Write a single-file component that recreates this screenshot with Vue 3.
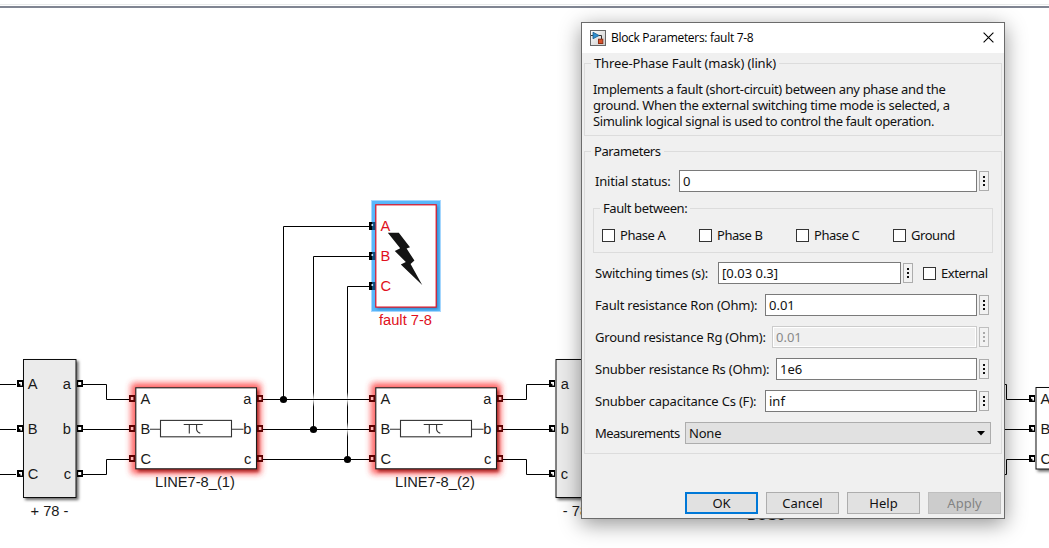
<script setup>
import { ref } from 'vue'

const portRows = [384, 429, 474]
const lineRows = [399, 429, 459]
const upper = ['A', 'B', 'C']
const lower = ['a', 'b', 'c']

const lines = [
  { x: 135, name: 'LINE7-8_(1)' },
  { x: 375, name: 'LINE7-8_(2)' },
]

const phases = ref([
  { name: 'Phase A', on: false },
  { name: 'Phase B', on: false },
  { name: 'Phase C', on: false },
  { name: 'Ground', on: false },
])

const fields = ref([
  { key: 'ron', label: 'Fault resistance Ron (Ohm):', value: '0.01', disabled: false },
  { key: 'rg', label: 'Ground resistance Rg (Ohm):', value: '0.01', disabled: true },
  { key: 'rs', label: 'Snubber resistance Rs (Ohm):', value: '1e6', disabled: false },
  { key: 'cs', label: 'Snubber capacitance Cs (F):', value: 'inf', disabled: false },
])

const initial = ref('0')
const times = ref('[0.03 0.3]')
const external = ref(false)
</script>

<template>
  <main class="canvas">
    <svg class="diagram" width="1049" height="548" viewBox="0 0 1049 548">
      <defs>
        <filter id="shadow" x="-20%" y="-20%" width="140%" height="140%">
          <feDropShadow dx="2" dy="2" stdDeviation="1.6" flood-color="#000" flood-opacity=".6" />
        </filter>
        <filter id="glow" x="-20%" y="-25%" width="140%" height="150%">
          <feGaussianBlur stdDeviation="3.2" />
        </filter>
        <filter id="soft" x="-10%" y="-10%" width="120%" height="120%">
          <feGaussianBlur stdDeviation="1.4" />
        </filter>
        <linearGradient id="hop" x1="0" y1="0" x2="0" y2="1">
          <stop offset="0" stop-color="#fff" stop-opacity="0" />
          <stop offset=".5" stop-color="#fff" stop-opacity=".95" />
          <stop offset="1" stop-color="#fff" stop-opacity="0" />
        </linearGradient>
        <g id="port">
          <rect width="6" height="7" fill="#000" />
          <path d="M2 2h3v3.4h-1.6v-1.6h-1.4z" fill="#fff" />
        </g>
        <g id="outport">
          <rect width="6" height="7" fill="#000" />
          <rect x="1.2" y="2" width="3" height="3" fill="#fff" />
        </g>
        <g id="redport">
          <rect width="6" height="7" fill="#5c0000" />
          <rect x="1.8" y="2" width="2.6" height="3" fill="#ffb4b4" />
        </g>
      </defs>

      <rect y="4" width="1049" height="1" fill="#e9ebeb" />
      <rect y="6" width="1049" height="2" fill="#808592" />

      <!-- bus blocks -->
      <g class="bus">
        <rect x="23.5" y="359.5" width="52.5" height="138" filter="url(#shadow)" />
        <rect x="556" y="359.5" width="52.5" height="138" filter="url(#shadow)" />
      </g>
      <rect x="1036" y="387.5" width="120" height="81.5" fill="#fff" stroke="#111" filter="url(#shadow)" />

      <!-- glow behind the highlighted line blocks -->
      <g v-for="l in lines" :key="l.name">
        <rect :x="l.x - 4" y="383" width="130" height="91" rx="3" fill="#ff3b3b" opacity=".8" filter="url(#glow)" />
        <rect :x="l.x + 3" y="390" width="121" height="82" fill="#7d0000" opacity=".6" filter="url(#soft)" />
      </g>

      <!-- wires -->
      <g class="wires">
        <path d="M283.5 399.5V226.5H369M313.5 429.5V256.5H369M347.5 459.5V286.5H369" />
      </g>
      <rect x="312" y="392" width="3" height="15" fill="url(#hop)" />
      <rect x="346" y="392" width="3" height="15" fill="url(#hop)" />
      <rect x="346" y="422" width="3" height="15" fill="url(#hop)" />
      <g class="wires">
        <path d="M0 384.5H16M0 429.5H16M0 474.5H16" />
        <path d="M83 384.5H106.5V399.5H129M83 429.5H129M83 474.5H106.5V459.5H129" />
        <path d="M263 399.5H369M263 429.5H369M263 459.5H369" />
        <path d="M503 399.5H526.5V384.5H549M503 429.5H549M503 459.5H526.5V474.5H549" />
        <path d="M1000 384.5H1006.5V399.5H1029M1000 429.5H1029M1000 474.5H1006.5V459.5H1029" />
      </g>
      <circle cx="283.5" cy="399.5" r="3.6" />
      <circle cx="313.5" cy="429.5" r="3.6" />
      <circle cx="347.5" cy="459.5" r="3.6" />

      <!-- bus ports and labels -->
      <g v-for="(y, i) in portRows" :key="'p' + y">
        <use href="#port" x="17" :y="y - 4" />
        <use href="#outport" x="77" :y="y - 4" />
        <use href="#port" x="549" :y="y - 4" />
        <text x="27.7" :y="y + 4.7">{{ upper[i] }}</text>
        <text x="71" :y="y + 4.7" text-anchor="end">{{ lower[i] }}</text>
        <text x="560.7" :y="y + 4.7">{{ lower[i] }}</text>
      </g>
      <text x="30.5" y="516">+ 78 -</text>
      <text x="562.8" y="516">- 78 +</text>
      <text x="747" y="519.8">BUS8</text>

      <!-- line blocks -->
      <g v-for="l in lines" :key="'b' + l.name" :transform="`translate(${l.x} 0)`">
        <rect x=".8" y="387.8" width="120.7" height="81" fill="#fff" stroke="#1c1c1c" stroke-width="1.1" />
        <path d="M15 429.2H25.5M96.5 429.2H108.5" class="thin" />
        <rect x="25.5" y="420.4" width="71" height="16.4" class="thin" />
        <path d="M48.7 424.5H67.7M54.3 424.5V433.5M61.6 424.5V429.5Q61.8 432 65.3 433.3" class="thin" />
        <g v-for="(y, i) in lineRows" :key="y">
          <use href="#redport" x="-6" :y="y - 4" />
          <use href="#redport" x="122" :y="y - 4" />
          <text x="5.6" :y="y + 4.7">{{ upper[i] }}</text>
          <text x="116.3" :y="y + 4.7" text-anchor="end">{{ lower[i] }}</text>
        </g>
        <text x="20" y="487.2">{{ l.name }}</text>
      </g>
      <g v-for="(y, i) in lineRows" :key="'r' + y">
        <use href="#port" x="1029" :y="y - 4" />
        <text x="1040.6" :y="y + 4.7">{{ upper[i] }}</text>
      </g>

      <!-- fault block -->
      <rect x="371" y="200" width="70" height="112" fill="#a8d8ff" />
      <rect x="372" y="201" width="68" height="110" fill="#5ab7fb" />
      <rect x="377" y="206" width="61" height="103" fill="#1f6fae" opacity=".75" filter="url(#soft)" />
      <rect x="375.8" y="204.8" width="60.4" height="102.3" fill="#fff" stroke="#e01020" stroke-width="1.2" />
      <g v-for="(y, i) in [226, 256, 286]" :key="'f' + y">
        <rect x="369" :y="y - 4" width="3" height="8" fill="#000" />
        <rect x="372" :y="y - 4" width="3.3" height="8" fill="#0c4a7a" />
        <rect x="371.5" :y="y - 2" width="1.6" height="2" fill="#b9e0ff" />
        <text class="red" x="380.5" :y="y + 4.8">{{ upper[i] }}</text>
      </g>
      <path d="M387.8 232.8H398.8L410 247.3L406.6 248.5L414.4 260.6L410.6 264L422.2 285L400.8 264.6L405.8 262L394.8 251L400.2 248.3Z" fill="#141414" />
      <text class="red" x="379" y="324.8">fault 7-8</text>
    </svg>

    <section class="dialog">
      <header class="titlebar">
        <svg class="appicon" width="16" height="16" viewBox="0 0 16 16">
          <defs>
            <linearGradient id="paper" x1="0" y1="0" x2="1" y2="1">
              <stop offset="0" stop-color="#fff" />
              <stop offset="1" stop-color="#c9c9c9" />
            </linearGradient>
          </defs>
          <rect x=".5" y=".5" width="15" height="15" fill="url(#paper)" stroke="#666" />
          <path d="M1 5.5H3M8.5 5.5H11.5V9" fill="none" stroke="#333" />
          <path d="M3 2.2L9 5.5L3 8.8Z" fill="#2f8fd0" stroke="#155b8c" stroke-width=".8" />
          <rect x="8.5" y="9.2" width="4.3" height="4.3" fill="#d9532c" stroke="#8e2f14" />
        </svg>
        <h1>Block Parameters: fault 7-8</h1>
        <svg class="close" width="11" height="11" viewBox="0 0 11 11">
          <path d="M.6 .6L10.4 10.4M10.4 .6L.6 10.4" stroke="#000" stroke-width="1.1" />
        </svg>
      </header>

      <div class="body">
        <div class="group about">
          <div class="legend wide">Three-Phase Fault (mask) (link)</div>
          <p>Implements a fault (short-circuit) between any phase and the<br />ground. When the external switching time mode is selected, a<br /><span class="tight">Simulink logical signal is used to control the fault operation.</span></p>
        </div>

        <div class="group params">
          <div class="legend">Parameters</div>
          <div class="row first">
            <label class="w-init">Initial status:</label>
            <input v-model="initial" />
            <button class="more"><i /><i /><i /></button>
          </div>

          <div class="group phases">
            <div class="legend">Fault between:</div>
            <div class="checks">
              <label v-for="p in phases" :key="p.name" class="check">
                <input v-model="p.on" type="checkbox" />{{ p.name }}
              </label>
            </div>
          </div>

          <div class="rows">
            <div class="row">
              <label class="w-times">Switching times (s):</label>
              <input v-model="times" />
              <button class="more"><i /><i /><i /></button>
              <label class="check ext"><input v-model="external" type="checkbox" />External</label>
            </div>
            <div v-for="f in fields" :key="f.key" class="row">
              <label :class="'w-' + f.key">{{ f.label }}</label>
              <input v-model="f.value" :disabled="f.disabled" />
              <button class="more" :disabled="f.disabled"><i /><i /><i /></button>
            </div>
            <div class="row">
              <label class="w-meas">Measurements</label>
              <div class="combo">
                <span>None</span>
                <svg width="8" height="5" viewBox="0 0 8 5"><path d="M0 0H8L4 4.4Z" /></svg>
              </div>
            </div>
          </div>
        </div>

        <footer>
          <button class="btn ok">OK</button>
          <button class="btn">Cancel</button>
          <button class="btn">Help</button>
          <button class="btn" disabled>Apply</button>
        </footer>
      </div>
    </section>
  </main>
</template>

<style>
body {
  margin: 0;
  overflow: hidden;
}
</style>

<style scoped>
.canvas {
  position: relative;
  width: 1049px;
  height: 548px;
  overflow: hidden;
  background: #fff;
}
.canvas * {
  box-sizing: border-box;
}
.diagram {
  display: block;
  font: 14.67px 'Liberation Sans', Arial, sans-serif;
}
.diagram text {
  fill: #1a1a1a;
}
.diagram text.red {
  fill: #e01020;
}
.bus rect {
  fill: #ebebeb;
  stroke: #111;
}
.wires {
  fill: none;
  stroke: #000;
}
.thin {
  fill: none;
  stroke: #333;
  stroke-width: 1.1;
}
.dialog {
  position: absolute;
  left: 581px;
  top: 22px;
  width: 424px;
  height: 497px;
  border: 1px solid #6b6b6b;
  background: #f0f0f0;
  box-shadow: 0 5px 20px rgba(0, 0, 0, 0.42);
  display: flex;
  flex-direction: column;
  color: #111;
  font: 13px/16px 'Noto Sans', Tahoma, sans-serif;
}
.titlebar {
  height: 30px;
  flex: none;
  display: flex;
  align-items: center;
  padding: 0 10px 1px 8px;
  background: #fff;
}
.titlebar h1 {
  flex: 1;
  margin: 0 0 0 5px;
  color: #000;
  font: 12px/16px 'Open Sans', 'Segoe UI', sans-serif;
  letter-spacing: -0.3px;
}
.body {
  flex: 1;
  display: flex;
  flex-direction: column;
  padding: 10px 2px 4px;
}
.group {
  border: 1px solid #dcdcdc;
}
.legend {
  width: max-content;
  margin-top: -9px;
  margin-left: 6px;
  padding: 0 3px;
  background: #f0f0f0;
  white-space: nowrap;
  letter-spacing: -0.4px;
}
.legend.wide {
  letter-spacing: -0.13px;
}
.about {
  height: 73px;
}
.about p {
  margin: 10px 0 0 8px;
  white-space: nowrap;
  letter-spacing: -0.33px;
}
.about .tight {
  letter-spacing: -0.37px;
}
.params {
  height: 303px;
  margin-top: 15px;
}
.row {
  display: flex;
  align-items: center;
  height: 22px;
  padding: 0 12px 0 10px;
}
.row.first {
  margin-top: 11px;
}
.row > label:first-child {
  flex: none;
  white-space: nowrap;
  letter-spacing: -0.2px;
}
.w-init { width: 84px; }
.w-times { width: 123px; }
.w-ron { width: 170px; }
.w-rg { width: 177px; }
.w-rs { width: 181px; }
.w-cs { width: 170px; }
.row > label.w-meas {
  width: 90px;
  letter-spacing: -0.58px;
}
.row > input {
  flex: 1;
  min-width: 0;
  height: 22px;
  padding: 0 3px;
  border: 1px solid #7a7a7a;
  border-radius: 0;
  background: #fff;
  color: #111;
  font: inherit;
}
.row > input:disabled {
  border-color: #ccc;
  background: #f0f0f0;
  box-shadow: inset 0 0 0 1px #fff;
  color: #8a8a8a;
}
.more {
  flex: none;
  display: flex;
  flex-direction: column;
  align-items: center;
  justify-content: center;
  gap: 2px;
  width: 10px;
  height: 20px;
  margin-left: 2px;
  padding: 0;
  border: 1px solid #adadad;
  border-radius: 0;
  background: #f2f2f2;
}
.more i {
  width: 2px;
  height: 2px;
  background: #111;
}
.more:disabled {
  border-color: #bfbfbf;
}
.more:disabled i {
  background: #aaa;
}
.phases {
  width: 400px;
  height: 45px;
  margin: 16px 0 0 8px;
}
.checks {
  display: flex;
  margin: 11px 0 0 8px;
}
.check {
  flex: none;
  display: flex;
  align-items: center;
  width: 97px;
  white-space: nowrap;
  letter-spacing: -0.45px;
}
.check input {
  flex: none;
  appearance: none;
  width: 13px;
  height: 13px;
  margin: 0 5px 0 0;
  border: 1px solid #333;
  background: #fff;
}
.check.ext {
  width: 66px;
  margin-left: 10px;
}
.rows {
  display: flex;
  flex-direction: column;
  gap: 10px;
  margin-top: 9px;
}
.combo {
  flex: 1;
  display: flex;
  align-items: center;
  justify-content: space-between;
  height: 22px;
  margin-right: -2px;
  padding: 0 5px 0 3px;
  border: 1px solid #adadad;
  background: #e1e1e1;
  letter-spacing: -0.2px;
}
footer {
  display: flex;
  justify-content: flex-end;
  gap: 8px;
  margin-top: auto;
  padding-right: 1px;
}
.btn {
  width: 73px;
  height: 22px;
  padding: 0;
  border: 1px solid #adadad;
  border-radius: 0;
  background: #e1e1e1;
  color: #111;
  font: inherit;
}
.btn.ok {
  border: 2px solid #0078d7;
}
.btn:disabled {
  border-color: #bfbfbf;
  background: #ccc;
  color: #838383;
}
</style>
